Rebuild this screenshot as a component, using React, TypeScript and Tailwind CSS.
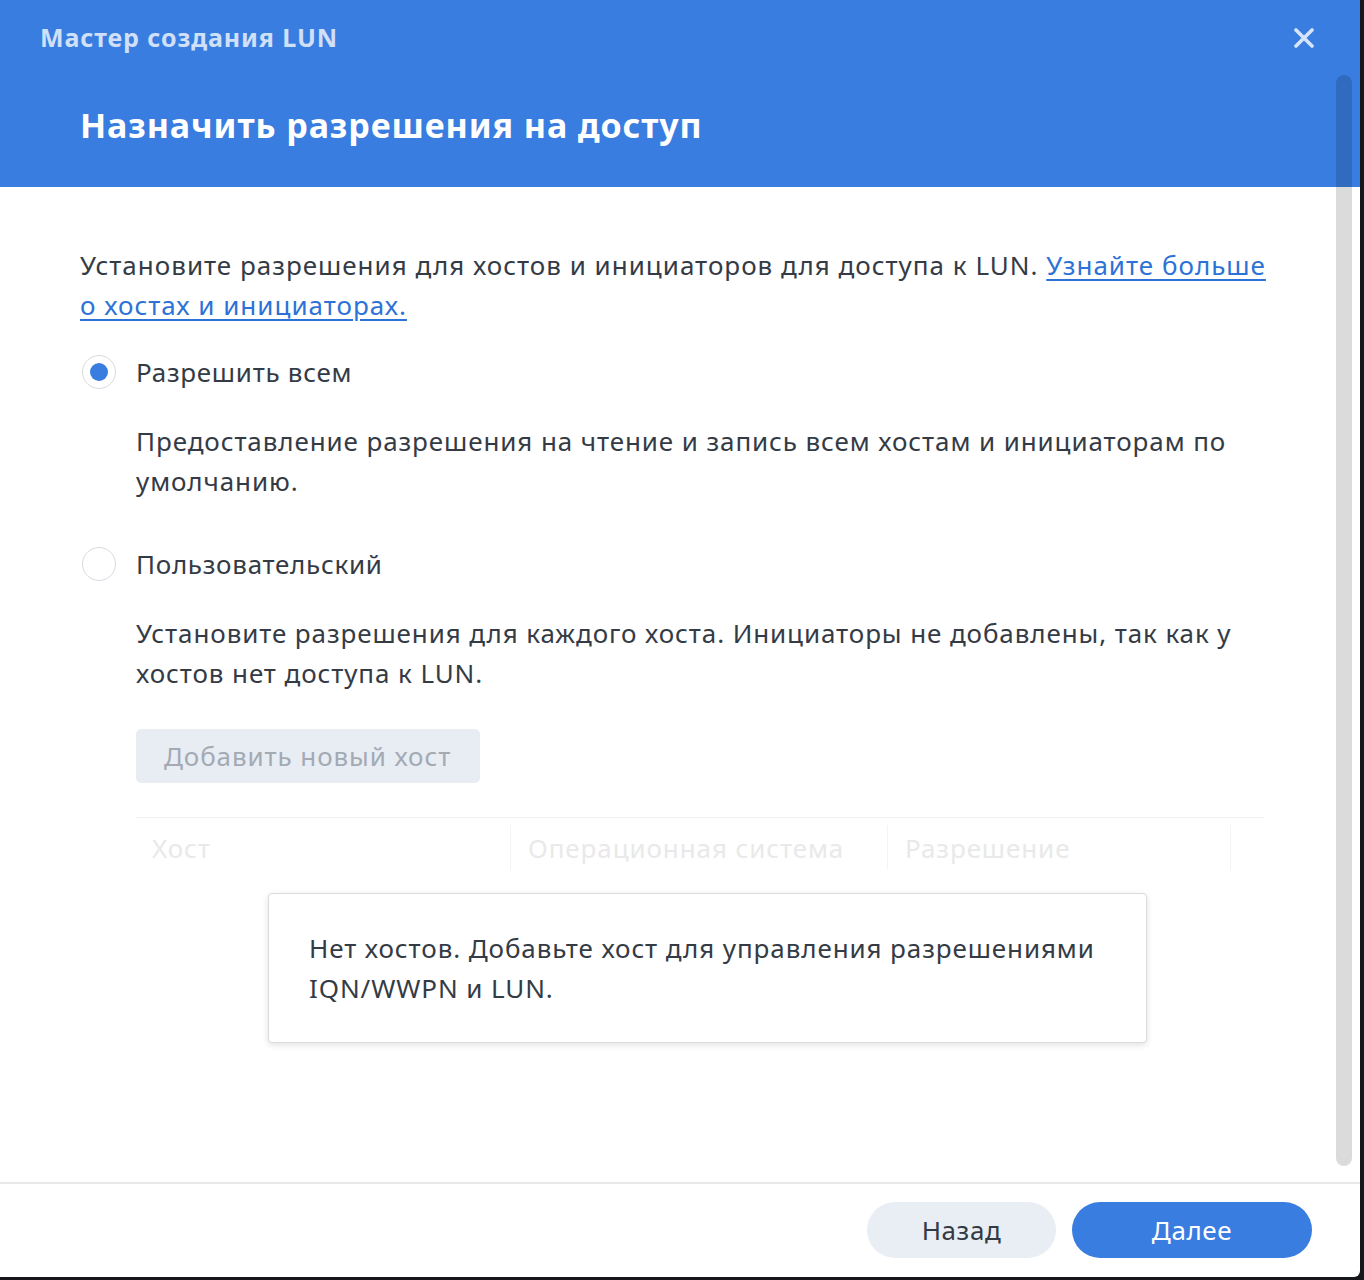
import { FC } from "react";

const font = { fontFamily: '"Noto Sans", "DejaVu Sans", sans-serif' };

const Radio: FC<{ checked?: boolean; label: string }> = ({ checked, label }) => (
  <div className="flex h-10 items-center">
    <div className="ml-[2px] flex h-[34px] w-[34px] items-center justify-center rounded-full border border-[#d6dae0] bg-white">
      {checked && <div className="h-[18px] w-[18px] rounded-full bg-[#3a7de0]" />}
    </div>
    <span className="ml-5 text-[26px] tracking-[0.7px] text-[#343b45]">{label}</span>
  </div>
);

const App: FC = () => {
  return (
    <div className="h-[1280px] w-[1364px] bg-[#15171c]" style={font}>
      <div className="relative flex h-[1277px] w-[1360px] flex-col overflow-hidden rounded-br-md bg-white">
        {/* header */}
        <div className="h-[187px] shrink-0 bg-[#3a7de0]">
          <div className="flex h-[76px] items-center justify-between pl-10 pr-[46px]">
            <span className="text-[25px] font-bold tracking-[0.9px] text-[#cfe0f8]">Мастер создания LUN</span>
            <svg width="20" height="20" viewBox="0 0 20 20" className="text-[#d6e5fa]">
              <path d="M2 2 L18 18 M18 2 L2 18" stroke="currentColor" strokeWidth="3.6" strokeLinecap="round" />
            </svg>
          </div>
          <div className="mt-[29px] pl-20 text-[34px] font-bold leading-10 tracking-[0.9px] text-white">
            Назначить разрешения на доступ
          </div>
        </div>

        {/* body */}
        <div className="flex-1 pl-20 pr-[90px] pt-[58px] text-[26px] leading-10 tracking-[0.9px] text-[#343b45]">
          <p className="tracking-[1px]">
            Установите разрешения для хостов и инициаторов для доступа к LUN.{" "}
            <a className="text-[#2d72d6] underline underline-offset-4">Узнайте больше</a>
            <br />
            <a className="text-[#2d72d6] underline underline-offset-4">о хостах и инициаторах.</a>
          </p>

          <div className="mt-[27px]">
            <Radio checked label="Разрешить всем" />
          </div>
          <p className="ml-14 mt-[29px] pr-4">
            Предоставление разрешения на чтение и запись всем хостам и инициаторам по умолчанию.
          </p>

          <div className="mt-[43px]">
            <Radio label="Пользовательский" />
          </div>
          <p className="ml-14 mt-[29px] pr-4">
            Установите разрешения для каждого хоста. Инициаторы не добавлены, так как у хостов нет доступа к LUN.
          </p>

          <div className="ml-14 mt-9 mr-[6px]">
            <button className="h-[54px] w-[344px] rounded-[5px] bg-[#e8edf3] pl-7 text-left text-[26px] tracking-[0.9px] text-[#a3aab4]">
              Добавить новый хост
            </button>

            <div className="mt-[34px] flex h-[60px] border-t border-[#f3f3f3] text-[#e9e9e9]">
              <div className="my-[7px] flex w-[375px] items-center border-r border-[#f4f4f4] pl-4">Хост</div>
              <div className="my-[7px] flex w-[377px] items-center border-r border-[#f4f4f4] pl-[17px]">Операционная система</div>
              <div className="my-[7px] flex w-[343px] items-center border-r border-[#f4f4f4] pl-[17px]">Разрешение</div>
            </div>

            <div className="ml-[132px] mt-4 h-[150px] w-[879px] rounded-[4px] border border-[#dcdcdc] bg-white pl-10 pr-8 pt-[34px] shadow-[0_2px_6px_rgba(0,0,0,0.12)]">
              Нет хостов. Добавьте хост для управления разрешениями IQN/WWPN и LUN.
            </div>
          </div>
        </div>

        {/* footer */}
        <div className="flex h-[95px] shrink-0 items-start justify-end gap-4 border-t-2 border-[#e8e8e8] pr-12 pt-[18px]">
          <button className="h-14 w-[189px] rounded-full bg-[#e9eef4] text-[26px] tracking-[0.6px] text-[#333a44]">
            Назад
          </button>
          <button className="h-14 w-[240px] rounded-full bg-[#3a7de0] text-[26px] tracking-[0.6px] text-white">
            Далее
          </button>
        </div>

        {/* scrollbar */}
        <div className="absolute left-[1336px] top-[75px] h-[1091px] w-4 rounded-full bg-[rgba(0,0,0,0.14)]" />
      </div>
    </div>
  );
};

export default App;
